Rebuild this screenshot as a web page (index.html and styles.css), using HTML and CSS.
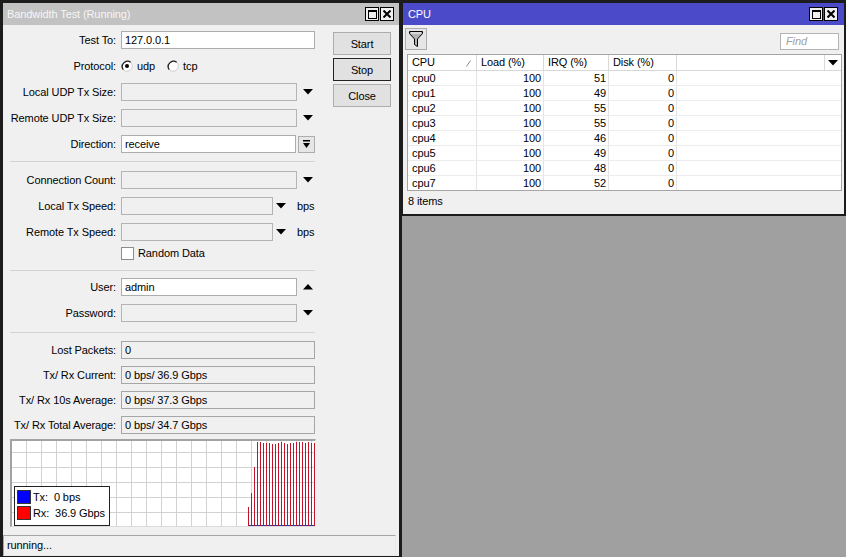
FILE: index.html
```html
<!DOCTYPE html>
<html>
<head>
<meta charset="utf-8">
<title>Bandwidth Test</title>
<link rel="stylesheet" href="styles.css">
</head>
<body>
<div class="desktop">

  <div class="window win-bw">
    <div class="titlebar inactive">
      <span class="title">Bandwidth Test (Running)</span>
      <div class="tbtns">
        <span class="tbtn"><svg width="9" height="9" viewBox="0 0 9 9"><rect x="0.5" y="0.5" width="8" height="8" fill="none" stroke="#000"/><rect x="0" y="0" width="9" height="2" fill="#000"/></svg></span>
        <span class="tbtn"><svg width="8" height="8" viewBox="0 0 8 8"><path d="M0.5 0.5 L7.5 7.5 M7.5 0.5 L0.5 7.5" stroke="#000" stroke-width="2"/></svg></span>
      </div>
    </div>
    <div class="bw-body">
      <div class="bw-main">
        <div class="form">
          <div class="row"><span class="lbl">Test To:</span><div class="field edit w-full">127.0.0.1</div></div>
          <div class="row"><span class="lbl">Protocol:</span>
            <span class="radio"><svg width="12" height="12" viewBox="0 0 12 12"><circle cx="6" cy="6" r="5.3" fill="#fff" stroke="#d0d0d0"/><path d="M2.3 9.7 A5.3 5.3 0 0 1 9.7 2.3" fill="none" stroke="#222" stroke-width="1.3"/><circle cx="6" cy="6" r="2" fill="#000"/></svg></span><span class="rtext">udp</span>
            <span class="radio gap"><svg width="12" height="12" viewBox="0 0 12 12"><circle cx="6" cy="6" r="5.3" fill="#fff" stroke="#d0d0d0"/><path d="M2.3 9.7 A5.3 5.3 0 0 1 9.7 2.3" fill="none" stroke="#222" stroke-width="1.3"/></svg></span><span class="rtext">tcp</span>
          </div>
          <div class="row"><span class="lbl">Local UDP Tx Size:</span><div class="field dis w-arrow"></div><span class="dd"><svg width="10" height="6" viewBox="0 0 10 6"><polygon points="0,0 10,0 5,5.5" fill="#000"/></svg></span></div>
          <div class="row"><span class="lbl">Remote UDP Tx Size:</span><div class="field dis w-arrow"></div><span class="dd"><svg width="10" height="6" viewBox="0 0 10 6"><polygon points="0,0 10,0 5,5.5" fill="#000"/></svg></span></div>
          <div class="row"><span class="lbl">Direction:</span><div class="field edit w-dir">receive</div><span class="dirbtn"><svg width="7" height="9" viewBox="0 0 7 9"><rect x="0" y="0" width="7" height="1.5" fill="#000"/><polygon points="0,3 7,3 3.5,8" fill="#000"/></svg></span></div>
          <div class="sep sep1"></div>
          <div class="row"><span class="lbl">Connection Count:</span><div class="field dis w-arrow"></div><span class="dd"><svg width="10" height="6" viewBox="0 0 10 6"><polygon points="0,0 10,0 5,5.5" fill="#000"/></svg></span></div>
          <div class="row"><span class="lbl">Local Tx Speed:</span><div class="field dis w-bps"></div><span class="dd small"><svg width="10" height="6" viewBox="0 0 10 6"><polygon points="0,0 10,0 5,5.5" fill="#000"/></svg></span><span class="unit">bps</span></div>
          <div class="row"><span class="lbl">Remote Tx Speed:</span><div class="field dis w-bps"></div><span class="dd small"><svg width="10" height="6" viewBox="0 0 10 6"><polygon points="0,0 10,0 5,5.5" fill="#000"/></svg></span><span class="unit">bps</span></div>
          <div class="row row-check"><span class="lbl"></span><span class="check"></span><span class="ctext">Random Data</span></div>
          <div class="sep sep2"></div>
          <div class="row"><span class="lbl">User:</span><div class="field edit w-arrow">admin</div><span class="dd"><svg width="10" height="6" viewBox="0 0 10 6"><polygon points="0,5.5 10,5.5 5,0" fill="#000"/></svg></span></div>
          <div class="row"><span class="lbl">Password:</span><div class="field dis w-arrow"></div><span class="dd"><svg width="10" height="6" viewBox="0 0 10 6"><polygon points="0,0 10,0 5,5.5" fill="#000"/></svg></span></div>
          <div class="sep sep3"></div>
          <div class="row row-stat"><span class="lbl">Lost Packets:</span><div class="field ro w-full">0</div></div>
          <div class="row row-stat"><span class="lbl">Tx/ Rx Current:</span><div class="field ro w-full">0 bps/ 36.9 Gbps</div></div>
          <div class="row row-stat"><span class="lbl">Tx/ Rx 10s Average:</span><div class="field ro w-full">0 bps/ 37.3 Gbps</div></div>
          <div class="row row-stat"><span class="lbl">Tx/ Rx Total Average:</span><div class="field ro w-full">0 bps/ 34.7 Gbps</div></div>
        </div>
        <div class="btncol">
          <button class="btn">Start</button>
          <button class="btn default">Stop</button>
          <button class="btn">Close</button>
        </div>
      </div>

      <div class="graph">
        <div class="bars">
          <span class="bar" style="height:19px"></span>
          <span class="bar" style="height:33px"></span>
          <span class="bar" style="height:59px"></span>
          <span class="bar" style="height:84px"></span>
          <span class="bar" style="height:84px"></span>
          <span class="bar" style="height:83px"></span>
          <span class="bar" style="height:83px"></span>
          <span class="bar" style="height:83px"></span>
          <span class="bar" style="height:82px"></span>
          <span class="bar" style="height:82px"></span>
          <span class="bar" style="height:83px"></span>
          <span class="bar" style="height:84px"></span>
          <span class="bar" style="height:83px"></span>
          <span class="bar" style="height:82px"></span>
          <span class="bar" style="height:83px"></span>
          <span class="bar" style="height:83px"></span>
          <span class="bar" style="height:84px"></span>
          <span class="bar" style="height:84px"></span>
          <span class="bar" style="height:84px"></span>
          <span class="bar" style="height:83px"></span>
          <span class="bar" style="height:84px"></span>
          <span class="bar" style="height:83px"></span>
          <span class="bar" style="height:83px"></span>
        </div>
        <div class="legend">
          <div class="lrow"><span class="sw tx"></span><span>Tx:&nbsp; 0 bps</span></div>
          <div class="lrow"><span class="sw rx"></span><span>Rx:&nbsp; 36.9 Gbps</span></div>
        </div>
      </div>

      <div class="statusbar">running...</div>
    </div>
  </div>

  <div class="window win-cpu">
    <div class="titlebar active">
      <span class="title">CPU</span>
      <div class="tbtns">
        <span class="tbtn"><svg width="9" height="9" viewBox="0 0 9 9"><rect x="0.5" y="0.5" width="8" height="8" fill="none" stroke="#000"/><rect x="0" y="0" width="9" height="2" fill="#000"/></svg></span>
        <span class="tbtn"><svg width="8" height="8" viewBox="0 0 8 8"><path d="M0.5 0.5 L7.5 7.5 M7.5 0.5 L0.5 7.5" stroke="#000" stroke-width="2"/></svg></span>
      </div>
    </div>
    <div class="cpu-body">
      <div class="toolbar">
        <span class="filterbtn"><svg width="14" height="16" viewBox="0 0 14 16"><path d="M0.5 0.5 H13.5 V2.5 L8.5 8 V15.5 L5.5 13.5 V8 L0.5 2.5 Z" fill="#b4b4b4" stroke="#000"/><path d="M2 2 H12" stroke="#fff"/></svg></span>
        <div class="find">Find</div>
      </div>
      <div class="table">
        <div class="thead">
          <div class="th">CPU<svg class="sorticon" width="5" height="7" viewBox="0 0 5 7"><path d="M0.5 6.5 L4.5 0.5" stroke="#8a8a8a"/></svg></div>
          <div class="th">Load (%)</div>
          <div class="th">IRQ (%)</div>
          <div class="th">Disk (%)</div>
          <div class="th th-last"><span class="hdd"><svg width="10" height="6" viewBox="0 0 10 6"><polygon points="0,0 10,0 5,5.5" fill="#000"/></svg></span></div>
        </div>
        <div class="tr"><div class="td">cpu0</div><div class="td num">100</div><div class="td num">51</div><div class="td num">0</div><div class="td td-last"></div></div>
        <div class="tr"><div class="td">cpu1</div><div class="td num">100</div><div class="td num">49</div><div class="td num">0</div><div class="td td-last"></div></div>
        <div class="tr"><div class="td">cpu2</div><div class="td num">100</div><div class="td num">55</div><div class="td num">0</div><div class="td td-last"></div></div>
        <div class="tr"><div class="td">cpu3</div><div class="td num">100</div><div class="td num">55</div><div class="td num">0</div><div class="td td-last"></div></div>
        <div class="tr"><div class="td">cpu4</div><div class="td num">100</div><div class="td num">46</div><div class="td num">0</div><div class="td td-last"></div></div>
        <div class="tr"><div class="td">cpu5</div><div class="td num">100</div><div class="td num">49</div><div class="td num">0</div><div class="td td-last"></div></div>
        <div class="tr"><div class="td">cpu6</div><div class="td num">100</div><div class="td num">48</div><div class="td num">0</div><div class="td td-last"></div></div>
        <div class="tr"><div class="td">cpu7</div><div class="td num">100</div><div class="td num">52</div><div class="td num">0</div><div class="td td-last"></div></div>
      </div>
      <div class="items">8 items</div>
    </div>
  </div>

</div>
</body>
</html>
```

FILE: styles.css
```css
* { box-sizing: border-box; }
html, body { margin: 0; padding: 0; }
body {
  font-family: "Liberation Sans", Arial, sans-serif;
  font-size: 11px;
  letter-spacing: -0.1px;
  color: #000;
  background: #a0a0a0;
}
.desktop {
  position: relative;
  width: 846px;
  height: 557px;
  background: #a0a0a0;
  overflow: hidden;
}

/* windows */
.window {
  position: absolute;
  top: 0;
  background: #f0f0f0;
  border: 3px solid #1c1c1c;
  display: flex;
  flex-direction: column;
}
.win-bw { left: 0; width: 402px; height: 557px; border-bottom-width: 1px; }
.win-cpu { left: 400px; width: 446px; height: 216px; border-right-width: 2px; border-bottom-width: 2px; }

.titlebar {
  flex: none;
  height: 22px;
  display: flex;
  align-items: center;
  padding: 0 5px 0 4px;
}
.titlebar.inactive { background: #c2c2c2; color: #f6f6f6; }
.titlebar.active { background: #4b4bc9; color: #fff; padding-left: 5px; padding-right: 6px; }
.title { flex: 1; font-size: 11px; }
.tbtns { display: flex; gap: 1px; }
.tbtn {
  width: 14px;
  height: 14px;
  border: 1px solid #000;
  background: #f0f0f0;
  display: flex;
  align-items: center;
  justify-content: center;
}

/* bandwidth body */
.bw-body { flex: 1; display: flex; flex-direction: column; }
.bw-main { display: flex; }
.form { width: 313px; padding: 2px 0 0 7px; }
.row { display: flex; align-items: center; height: 26px; }
.row-stat { height: 25px; }
.row-check { height: 16px; }
.lbl { width: 111px; flex: none; text-align: right; padding-right: 5px; white-space: nowrap; }

.field {
  height: 18px;
  border: 1px solid #adadad;
  padding: 0 3px;
  line-height: 16px;
  white-space: nowrap;
  flex: none;
}
.field.edit { background: #fff; }
.field.dis { background: #f0f0f0; border-color: #b4b4b4; }
.field.ro { background: #f0f0f0; border-color: #a6a6a6; }
.w-full { width: 194px; }
.w-arrow { width: 176px; }
.w-dir { width: 175px; }
.w-bps { width: 152px; }

.dd { width: 18px; display: flex; justify-content: flex-end; padding-right: 2px; flex: none; }
.dd svg { display: block; }
.dd.small { width: 15px; }
.unit { margin-left: 9px; }
.dirbtn {
  margin-left: 2px;
  width: 17px;
  height: 17px;
  border: 1px solid #adadad;
  background: #e6e6e6;
  display: flex;
  align-items: center;
  justify-content: center;
}

.radio { display: flex; }
.radio svg { display: block; }
.radio.gap { margin-left: 12px; }
.rtext { margin-left: 4px; }

.check { width: 13px; height: 13px; border: 1px solid #8c8c8c; background: #fff; flex: none; }
.ctext { margin-left: 4px; }

.sep { height: 1px; background: #d4d4d4; width: 305px; }
.sep1 { margin: 4px 0 5px; }
.sep2 { margin: 9px 0 3px; }
.sep3 { margin: 6px 0 4px; }

.btncol { margin-left: 17px; padding-top: 7px; display: flex; flex-direction: column; gap: 3px; }
.btn {
  width: 58px;
  height: 23px;
  border: 1px solid #adadad;
  background: #e1e1e1;
  font-family: inherit;
  font-size: 11px;
  letter-spacing: -0.1px;
  color: #000;
  padding: 0;
}
.btn.default { border: 1px solid #222; }

/* graph */
.graph {
  position: relative;
  margin: 2px 0 0 7px;
  width: 306px;
  height: 88px;
  border-top: 2px solid #a3a3a3;
  border-left: 2px solid #a3a3a3;
  border-right: 1px solid #f6f6f6;
  border-bottom: 1px solid #dcdcdc;
  background-color: #fff;
  background-image:
    linear-gradient(to right, transparent 14px, #d2d2d2 14px),
    linear-gradient(to bottom, transparent 14px, #d2d2d2 14px);
  background-size: 15px 100%, 100% 15px;
  background-position: 0 0, 0 -3px;
  display: flex;
  justify-content: flex-end;
  align-items: flex-end;
}
.bars {
  display: flex;
  align-items: flex-end;
  gap: 2px;
  height: 100%;
  background: linear-gradient(#33339a, #33339a) bottom / 100% 1px no-repeat;
}
.bar { width: 1px; background: #c3142c; display: block; }

.legend {
  position: absolute;
  left: 2px;
  top: 45px;
  width: 96px;
  height: 40px;
  border: 1px solid #222;
  background: #fff;
  padding: 2px 0 0 2px;
  font-size: 11px;
}
.lrow { display: flex; align-items: center; height: 16px; }
.sw { width: 14px; height: 14px; border: 1px solid #333; margin-right: 2px; }
.sw.tx { background: #0000ff; }
.sw.rx { background: #ff0000; }

.statusbar {
  margin: 8px 3px 0 0;
  height: 21px;
  border: 1px solid #a6a6a6;
  border-right-color: #e8e8e8;
  border-bottom-color: #e8e8e8;
  padding-left: 3px;
  line-height: 19px;
}

/* cpu window */
.cpu-body { flex: 1; display: flex; flex-direction: column; }
.toolbar { height: 28px; display: flex; align-items: flex-start; padding: 3px 5px 0 2px; }
.filterbtn {
  width: 22px;
  height: 22px;
  border: 1px solid #adadad;
  background: #e6e6e6;
  display: flex;
  align-items: center;
  justify-content: center;
}
.find {
  margin-left: auto;
  margin-top: 5px;
  width: 59px;
  height: 17px;
  border: 1px solid #b4b4b4;
  background: #fff;
  color: #a0a0a0;
  font-style: italic;
  padding-left: 5px;
  line-height: 15px;
}
.table {
  margin: 1px 2px 0 4px;
  border: 1px solid #a5a5a5;
  background: #fff;
}
.thead, .tr {
  display: grid;
  grid-template-columns: 69px 67px 65px 68px 1fr;
}
.thead { height: 16px; border-bottom: 1px solid #d8d8d8; }
.th {
  border-right: 1px solid #d8d8d8;
  padding-left: 4px;
  line-height: 15px;
  position: relative;
  white-space: nowrap;
}
.sorticon { position: absolute; right: 5px; top: 5px; }
.th-last { border-right: none; display: flex; justify-content: flex-end; padding-left: 0; }
.hdd {
  width: 17px;
  border-left: 1px solid #d8d8d8;
  display: flex;
  align-items: center;
  justify-content: center;
}
.tr { height: 15px; border-bottom: 1px solid #ececec; }
.tr:last-child { border-bottom: none; height: 14px; }
.td {
  border-right: 1px solid #e4e4e4;
  padding-left: 4px;
  line-height: 14px;
  white-space: nowrap;
}
.td.num { text-align: right; padding-left: 0; padding-right: 2px; }
.td-last { border-right: none; }
.items { height: 21px; line-height: 21px; padding-left: 5px; }
```
